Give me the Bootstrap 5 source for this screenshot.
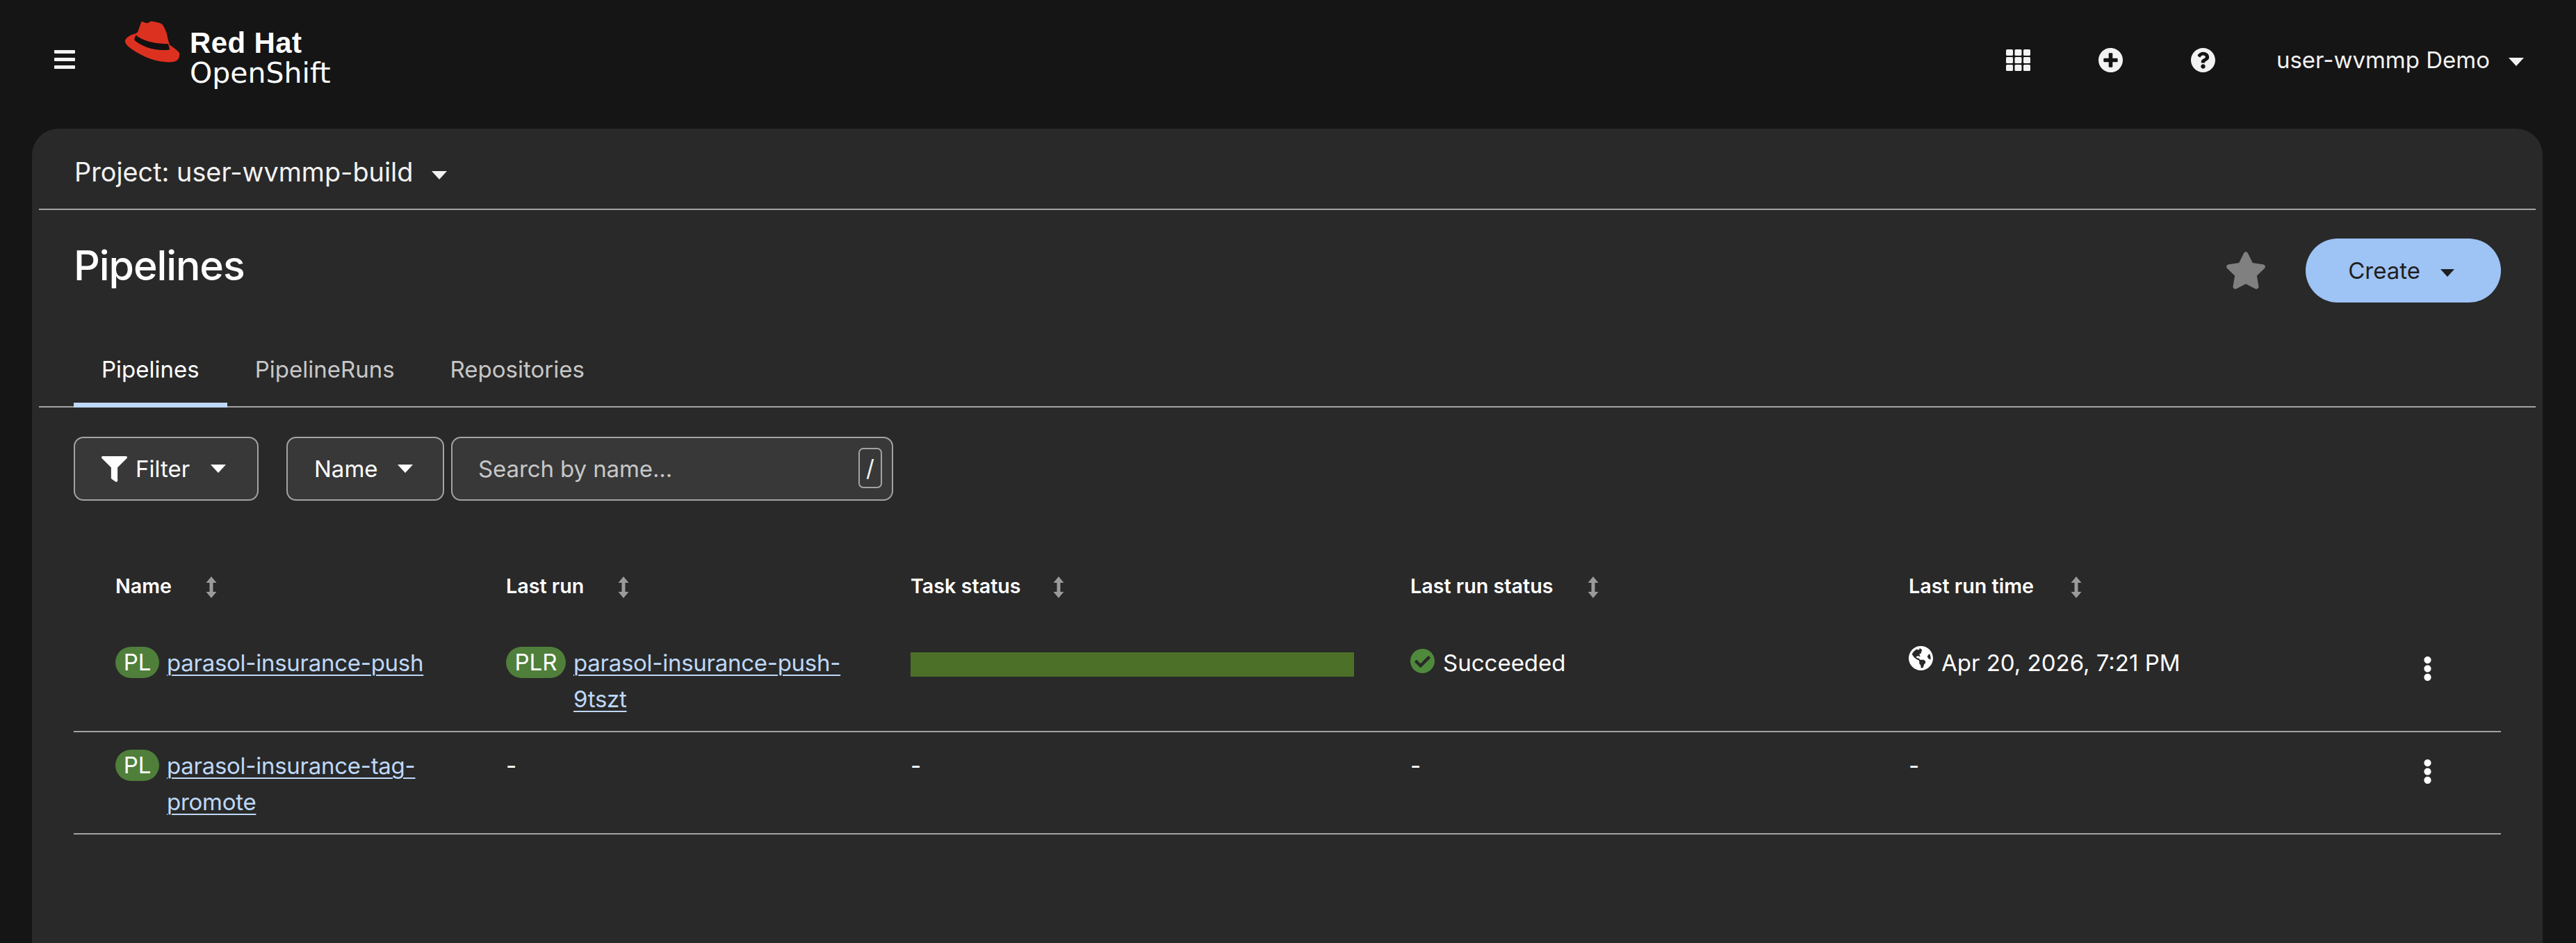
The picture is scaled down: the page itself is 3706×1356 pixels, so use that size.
<!DOCTYPE html>
<html lang="en">
<head>
<meta charset="utf-8">
<title>Pipelines</title>
<link href="https://cdn.jsdelivr.net/npm/bootstrap@5.3.0/dist/css/bootstrap.min.css" rel="stylesheet">
<style>
html,body{height:100%;}
body{background:#151515;color:#fff;font-family:Inter,"Liberation Sans",sans-serif;font-size:33px;line-height:53px;overflow:hidden;}
.topbar{height:185px;padding:0 75px 12px 78px;flex-wrap:nowrap;}
.icon-btn{background:none;border:0;padding:0;color:#f2f2f2;line-height:0;}
.ic-bars{width:30px;height:27px;display:block;margin-bottom:3px;}
.logo-wrap{margin-left:71px;gap:14px;margin-bottom:0;align-self:flex-start;padding-top:30px;}
.hat{width:80px;height:60px;}
.logo-text{padding-top:8px;color:#fff;}
.logo-a{font-family:"Liberation Sans",sans-serif;font-weight:700;font-size:42px;line-height:47px;letter-spacing:.4px;}
.logo-b{font-family:"DejaVu Sans",sans-serif;font-weight:400;font-size:41px;line-height:47px;margin-top:-3px;}
.top-icons{gap:98px;}
.top-icons svg{width:35px;height:35px;display:block;}
.user-menu{margin-left:88px;background:none;border:0;color:#f2f2f2;padding:0;font-size:33px;line-height:53px;}
.dropdown-toggle::after{border-top:12px solid;border-left:11px solid transparent;border-right:11px solid transparent;border-bottom:0;margin-left:27px;vertical-align:3px;}
.panel{background:#292929;margin:0 48px 0 46px;border-radius:38px 38px 0 0;min-height:0;}
.proj-bar{margin:0 10px;height:117px;padding:10px 0 0 51px;border-bottom:2px solid #a3a3a3;}
.proj-btn{background:none;border:0;color:#f2f2f2;padding:0;font-size:37.8px;line-height:53px;}
.title-row{padding:41px 60px 0 60px;}
.page-title{font-size:59px;line-height:78px;font-weight:500;margin:0;letter-spacing:-1.1px;}
.star-ic{width:60px;height:54px;color:#808080;display:block;}
.title-actions{gap:56px;}
.btn-create{--bs-btn-bg:#9ec3f5;--bs-btn-border-color:#9ec3f5;--bs-btn-color:#1f1f1f;--bs-btn-hover-bg:#9ec3f5;--bs-btn-hover-color:#1f1f1f;--bs-btn-hover-border-color:#9ec3f5;--bs-btn-border-radius:46px;--bs-btn-font-size:33px;--bs-btn-line-height:53px;--bs-btn-padding-x:61px;--bs-btn-padding-y:19.5px;--bs-btn-border-width:0;padding-right:67px;}
.btn-create.dropdown-toggle::after{margin-left:29px;border-left-width:10px;border-right-width:10px;border-top-width:11px;}
.tab-strip{margin:40px 10px 0;padding-left:50px;border-bottom:2px solid #a3a3a3;--bs-nav-tabs-border-width:0;}
.tab-strip .nav-link{color:#c7c7c7;padding:30px 40px 28px;font-size:33px;line-height:53px;border:0;border-radius:0;margin:0 0 -2px;background:none;}
.tab-strip .nav-link.active{color:#fff;box-shadow:inset 0 -7px 0 #bed8f8;background:none;}
.tool-row{padding:42px 0 0 60px;}
.tool-btn{--bs-btn-bg:#383838;--bs-btn-color:#fff;--bs-btn-border-color:#a3a3a3;--bs-btn-border-width:2px;--bs-btn-border-radius:14px;--bs-btn-font-size:33px;--bs-btn-line-height:53px;--bs-btn-hover-bg:#383838;--bs-btn-hover-color:#fff;--bs-btn-hover-border-color:#a3a3a3;--bs-btn-padding-y:17.5px;height:92px;display:flex;align-items:center;}
.tool-btn.dropdown-toggle::after{border-left-width:11px;border-right-width:11px;margin-left:28px;margin-top:0;vertical-align:0;}
.btn-filter{width:266px;padding:0 0 0 38px;margin-right:40px;}
.btn-filter svg{width:37px;height:37px;margin-right:12px;}
.btn-filter.dropdown-toggle::after{margin-left:30px;}
.btn-name{width:227px;padding:0 0 0 38px;margin-right:10px;}
.search-box{width:636px;height:92px;background:#383838;border:2px solid #a3a3a3;border-radius:14px;position:relative;}
.search-box input{background:none;border:0;color:#fff;padding:0 0 0 37px;font-size:33px;height:100%;width:100%;box-shadow:none;letter-spacing:-.1px;}
.search-box input::placeholder{color:#c7c7c7;opacity:1;}
.slash-key{position:absolute;right:14px;top:14px;width:34px;height:58px;border:2px solid #a3a3a3;border-radius:7px;font-size:33px;line-height:54px;text-align:center;color:#f2f2f2;font-family:inherit;background:none;padding:0;}
.pipes{margin:62px 60px 0 60px;width:calc(100% - 120px);table-layout:fixed;--bs-table-bg:transparent;--bs-table-color:#fff;--bs-table-border-color:#a3a3a3;color:#fff;}
.pipes th{height:123px;padding:0 0 3px;vertical-align:middle;font-size:28.7px;font-weight:600;border:0;color:#fff;}
.pipes td{padding:22px 50px 19px 0;vertical-align:top;border-bottom:2px solid #a3a3a3;height:147px;line-height:52px;}
.pipes th:first-child,.pipes td:first-child{padding-left:60px;}
.pipes td:last-child{padding:36px 0 0 40px;}
.cw1{width:622px}.cw2{width:582px}.cw3{width:719px}.cw4{width:717px}.cw5{width:700px}
.sort-ic{width:16px;height:31px;margin-left:49px;color:#9a9a9a;vertical-align:-7px;}
.pipes th:nth-child(3) .sort-ic{margin-left:46px;}
.pipes th:nth-child(5) .sort-ic{margin-left:53px;}
.kind-pill{flex:none;height:45px;border-radius:23px;background:#4f7f3a;color:#fff;margin-top:3px;line-height:44px;text-align:center;font-size:33px;}
.kind-pl{width:63px;}
.kind-plr{width:86px;}
.res-row{gap:11px;}
.res-link{color:#bed8f8;text-decoration:underline;text-underline-offset:5px;text-decoration-thickness:2.4px;letter-spacing:-.27px;}
.run-bar{height:35px;border-radius:0;background:none;margin-top:11px;width:638px;--bs-progress-bar-bg:#4c7028;}
.stat-ic{width:35px;height:35px;display:block;flex:none;margin-top:6px;}
.stat-row{gap:12px;}
.ok-ic{color:#4f8a3c;}
.globe-ic{margin-top:2px;}
.kebab-ic{width:13px;height:35px;display:block;color:#fff;}
</style>
</head>
<body>
<div class="d-flex flex-column vh-100">
  <nav class="navbar topbar">
    <div class="d-flex align-items-center">
      <button class="icon-btn" type="button" aria-label="Menu">
        <svg class="ic-bars" viewBox="0 60 448 392" preserveAspectRatio="none" fill="currentColor"><path d="M16 132h416c8.837 0 16-7.163 16-16V76c0-8.837-7.163-16-16-16H16C7.163 60 0 67.163 0 76v40c0 8.837 7.163 16 16 16zm0 160h416c8.837 0 16-7.163 16-16v-40c0-8.837-7.163-16-16-16H16c-8.837 0-16 7.163-16 16v40c0 8.837 7.163 16 16 16zm0 160h416c8.837 0 16-7.163 16-16v-40c0-8.837-7.163-16-16-16H16c-8.837 0-16 7.163-16 16v40c0 8.837 7.163 16 16 16z"/></svg>
      </button>
    </div>
    <a class="logo-wrap d-flex text-decoration-none me-auto" href="#">
      <svg class="hat" viewBox="85 58 245 185"><path fill="#dc3120" d="M143 108c6-14 11-34 17-46 3-3 14 7 25 6 8-1 16-9 21-8 15 2 36 6 44 12 8 8 17 26 22 43 3 15 7 33 13 50 12 6 36 26 43 35 3 20-6 38-28 40-45 5-100-7-150-36-30-17-62-37-63-55 0-16 26-31 47-35 3-2 6-4 9-6z"/><path fill="#111" d="M136 121c20 20 70 38 142 39 3 7 5 18 7 26-60 8-125-12-157-43 1-8 4-16 8-22z"/></svg>
      <div class="logo-text">
        <div class="logo-a">Red Hat</div>
        <div class="logo-b">OpenShift</div>
      </div>
    </a>
    <div class="d-flex align-items-center">
      <div class="d-flex align-items-center top-icons">
        <button class="icon-btn" type="button" aria-label="Apps">
          <svg viewBox="0 0 35 35" fill="currentColor"><rect x="0" y="2" width="10" height="9" rx="1.6"/><rect x="12.5" y="2" width="10" height="9" rx="1.6"/><rect x="25" y="2" width="10" height="9" rx="1.6"/><rect x="0" y="13" width="10" height="9" rx="1.6"/><rect x="12.5" y="13" width="10" height="9" rx="1.6"/><rect x="25" y="13" width="10" height="9" rx="1.6"/><rect x="0" y="24" width="10" height="9" rx="1.6"/><rect x="12.5" y="24" width="10" height="9" rx="1.6"/><rect x="25" y="24" width="10" height="9" rx="1.6"/></svg>
        </button>
        <button class="icon-btn" type="button" aria-label="Add">
          <svg viewBox="8 8 496 496" fill="currentColor"><path d="M256 8C119 8 8 119 8 256s111 248 248 248 248-111 248-248S393 8 256 8zm144 276c0 6.6-5.4 12-12 12h-92v92c0 6.6-5.4 12-12 12h-56c-6.6 0-12-5.4-12-12v-92h-92c-6.6 0-12-5.4-12-12v-56c0-6.6 5.4-12 12-12h92v-92c0-6.6 5.4-12 12-12h56c6.6 0 12 5.4 12 12v92h92c6.6 0 12 5.4 12 12v56z"/></svg>
        </button>
        <button class="icon-btn" type="button" aria-label="Help">
          <svg viewBox="8 8 496 496" fill="currentColor"><path d="M504 256c0 136.997-111.043 248-248 248S8 392.997 8 256C8 119.083 119.043 8 256 8s248 111.083 248 248zM262.655 90c-54.497 0-89.255 22.957-116.549 63.758-3.536 5.286-2.353 12.415 2.715 16.258l34.699 26.31c5.205 3.947 12.621 3.008 16.665-2.122 17.864-22.658 30.113-35.797 57.303-35.797 20.429 0 45.698 13.148 45.698 32.958 0 14.976-12.363 22.667-32.534 33.976C247.128 238.528 216 254.941 216 296v4c0 6.627 5.373 12 12 12h56c6.627 0 12-5.373 12-12v-1.333c0-28.462 83.186-29.647 83.186-106.667 0-58.002-60.165-102-116.531-102zM256 338c-25.365 0-46 20.635-46 46 0 25.364 20.635 46 46 46s46-20.636 46-46c0-25.365-20.635-46-46-46z"/></svg>
        </button>
      </div>
      <button class="user-menu dropdown-toggle" type="button">user-wvmmp Demo</button>
    </div>
  </nav>

  <main class="panel flex-grow-1">
    <div class="proj-bar d-flex align-items-center">
      <button class="proj-btn dropdown-toggle" type="button">Project: user-wvmmp-build</button>
    </div>

    <div class="title-row d-flex justify-content-between align-items-start">
      <h1 class="page-title">Pipelines</h1>
      <div class="d-flex align-items-center title-actions">
        <svg class="star-ic" viewBox="0 0 576 512" fill="currentColor"><path d="M259.3 17.8L194 150.2 47.9 171.5c-26.2 3.8-36.7 36.1-17.7 54.6l105.7 103-25 145.5c-4.5 26.3 23.2 46 46.4 33.7L288 439.6l130.7 68.7c23.2 12.2 50.9-7.4 46.4-33.7l-25-145.5 105.7-103c19-18.5 8.5-50.8-17.7-54.6L382 150.2 316.7 17.8c-11.7-23.6-45.6-23.9-57.4 0z"/></svg>
        <button class="btn btn-create dropdown-toggle" type="button">Create</button>
      </div>
    </div>

    <ul class="nav nav-tabs tab-strip">
      <li class="nav-item"><a class="nav-link active" href="#">Pipelines</a></li>
      <li class="nav-item"><a class="nav-link" href="#">PipelineRuns</a></li>
      <li class="nav-item"><a class="nav-link" href="#">Repositories</a></li>
    </ul>

    <div class="tool-row d-flex align-items-center">
      <button class="btn tool-btn btn-filter dropdown-toggle" type="button">
        <svg viewBox="0 0 512 512" fill="currentColor"><path d="M487.976 0H24.028C2.71 0-8.047 25.866 7.058 40.971L192 225.941V432c0 7.831 3.821 15.17 10.237 19.662l80 55.98C298.02 518.69 320 507.493 320 487.98V225.941l184.947-184.97C520.021 25.896 509.338 0 487.976 0z"/></svg>Filter
      </button>
      <button class="btn tool-btn btn-name dropdown-toggle" type="button">Name</button>
      <div class="search-box">
        <input class="form-control" type="text" placeholder="Search by name..." aria-label="Search by name">
        <kbd class="slash-key">/</kbd>
      </div>
    </div>

    <table class="table pipes">
      <colgroup><col class="cw1"><col class="cw2"><col class="cw3"><col class="cw4"><col class="cw5"><col></colgroup>
      <thead>
        <tr>
          <th>Name<svg class="sort-ic" viewBox="0 0 16 31" fill="currentColor"><path d="M8 0l7.500 9H10.500v13h5L8 31 .5 22h5V9h-5z"/></svg></th>
          <th>Last run<svg class="sort-ic" viewBox="0 0 16 31" fill="currentColor"><path d="M8 0l7.500 9H10.500v13h5L8 31 .5 22h5V9h-5z"/></svg></th>
          <th>Task status<svg class="sort-ic" viewBox="0 0 16 31" fill="currentColor"><path d="M8 0l7.500 9H10.500v13h5L8 31 .5 22h5V9h-5z"/></svg></th>
          <th>Last run status<svg class="sort-ic" viewBox="0 0 16 31" fill="currentColor"><path d="M8 0l7.500 9H10.500v13h5L8 31 .5 22h5V9h-5z"/></svg></th>
          <th>Last run time<svg class="sort-ic" viewBox="0 0 16 31" fill="currentColor"><path d="M8 0l7.500 9H10.500v13h5L8 31 .5 22h5V9h-5z"/></svg></th>
          <th></th>
        </tr>
      </thead>
      <tbody>
        <tr>
          <td><div class="d-flex res-row"><span class="kind-pill kind-pl">PL</span><a class="res-link" href="#">parasol-insurance-push</a></div></td>
          <td><div class="d-flex res-row"><span class="kind-pill kind-plr">PLR</span><a class="res-link" href="#">parasol-insurance-push-9tszt</a></div></td>
          <td><div class="progress run-bar"><div class="progress-bar" style="width:100%"></div></div></td>
          <td><div class="d-flex stat-row"><svg class="stat-ic ok-ic" viewBox="8 8 496 496" fill="currentColor"><path d="M504 256c0 136.967-111.033 248-248 248S8 392.967 8 256 119.033 8 256 8s248 111.033 248 248zM227.314 387.314l184-184c6.248-6.248 6.248-16.379 0-22.627l-22.627-22.627c-6.248-6.249-16.379-6.249-22.628 0L216 308.118l-70.059-70.059c-6.248-6.248-16.379-6.248-22.628 0l-22.627 22.627c-6.248 6.248-6.248 16.379 0 22.627l104 104c6.249 6.249 16.379 6.249 22.628.001z"/></svg><span>Succeeded</span></div></td>
          <td><div class="d-flex stat-row"><svg class="stat-ic globe-ic" viewBox="0 8 496 496" fill="currentColor"><path d="M248 8C111.03 8 0 119.03 0 256s111.03 248 248 248 248-111.03 248-248S384.97 8 248 8zm82.29 357.6c-3.9 3.88-7.99 7.95-11.31 11.28-2.99 3-5.1 6.7-6.17 10.71-1.51 5.66-2.73 11.38-4.77 16.87l-17.39 46.85c-13.76 3-28 4.69-42.65 4.69v-27.38c1.69-12.62-7.64-36.26-22.63-51.25-6-6-9.37-14.14-9.37-22.63v-32.01c0-11.64-6.27-22.34-16.46-27.97-14.37-7.95-34.81-19.06-48.81-26.11-11.48-5.78-22.1-13.14-31.65-21.75l-.8-.72a114.792 114.792 0 0 1-18.06-20.74c-9.38-13.77-24.66-36.42-34.59-51.14 20.47-45.5 57.36-82.04 103.2-101.89l24.01 12.01C203.48 89.74 216 82.01 216 70.11v-11.3c7.99-1.29 16.12-2.11 24.39-2.42l28.3 28.3c6.25 6.25 6.25 16.38 0 22.63L264 112l-10.34 10.34c-3.12 3.12-3.12 8.19 0 11.31l4.69 4.69c3.12 3.12 3.12 8.19 0 11.31l-8 8a8.008 8.008 0 0 1-5.66 2.34h-8.99c-2.08 0-4.08.81-5.58 2.27l-9.92 9.65a8.008 8.008 0 0 0-1.58 9.31l15.59 31.19c2.66 5.32-1.21 11.58-7.15 11.58h-5.64c-1.93 0-3.79-.7-5.24-1.96l-9.28-8.06a16.017 16.017 0 0 0-15.55-3.1l-31.17 10.39a11.95 11.95 0 0 0-8.17 11.34c0 4.53 2.56 8.66 6.61 10.69l11.08 5.54c9.41 4.71 19.79 7.16 30.31 7.16s22.59 27.29 32 32h66.75c8.49 0 16.62 3.37 22.63 9.37l13.69 13.69a30.503 30.503 0 0 1 8.93 21.57 46.536 46.536 0 0 1-13.72 32.98zM417 274.25c-5.79-1.45-10.84-5-14.15-9.97l-17.98-26.97a23.97 23.97 0 0 1 0-26.62l19.59-29.38c2.32-3.47 5.5-6.29 9.24-8.15l12.98-6.49C440.2 193.59 448 223.87 448 256c0 8.67-.74 17.16-1.82 25.54L417 274.25z"/></svg><span>Apr 20, 2026, 7:21 PM</span></div></td>
          <td><button class="icon-btn" type="button" aria-label="Actions"><svg class="kebab-ic" viewBox="24 8 144 496" fill="currentColor"><path d="M96 184c39.8 0 72 32.2 72 72s-32.2 72-72 72-72-32.2-72-72 32.2-72 72-72zM24 80c0 39.8 32.2 72 72 72s72-32.2 72-72S135.8 8 96 8 24 40.2 24 80zm0 352c0 39.8 32.2 72 72 72s72-32.2 72-72-32.2-72-72-72-72 32.2-72 72z"/></svg></button></td>
        </tr>
        <tr>
          <td><div class="d-flex res-row"><span class="kind-pill kind-pl">PL</span><a class="res-link" href="#">parasol-insurance-tag-promote</a></div></td>
          <td>-</td>
          <td>-</td>
          <td>-</td>
          <td>-</td>
          <td><button class="icon-btn" type="button" aria-label="Actions"><svg class="kebab-ic" viewBox="24 8 144 496" fill="currentColor"><path d="M96 184c39.8 0 72 32.2 72 72s-32.2 72-72 72-72-32.2-72-72 32.2-72 72-72zM24 80c0 39.8 32.2 72 72 72s72-32.2 72-72S135.8 8 96 8 24 40.2 24 80zm0 352c0 39.8 32.2 72 72 72s72-32.2 72-72-32.2-72-72-72-72 32.2-72 72z"/></svg></button></td>
        </tr>
      </tbody>
    </table>
  </main>
</div>
<script src="https://cdn.jsdelivr.net/npm/bootstrap@5.3.0/dist/js/bootstrap.bundle.min.js"></script>
</body>
</html>
